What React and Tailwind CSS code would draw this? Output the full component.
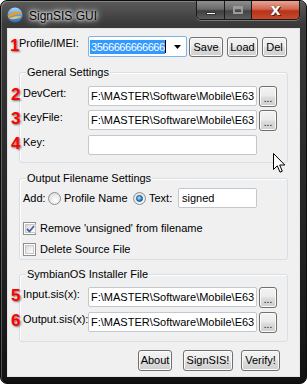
import React from 'react'

const ui = "font-['Liberation_Sans',Arial,sans-serif] text-[11px] leading-[13px] text-black"
const btnSkin =
  'border border-[#707070] rounded-[3px] bg-[linear-gradient(180deg,#f3f3f3_0%,#ebebeb_48%,#dddddd_52%,#cfcfcf_100%)] shadow-[inset_0_0_0_1px_#fbfbfb] flex items-center justify-center'
const boxSkin = 'block bg-white border border-[#c3c7ce] rounded-[2px] overflow-hidden whitespace-nowrap leading-[18px]'
const path = 'F:\\MASTER\\Software\\Mobile\\E63'

function Num({ children, className }) {
  return (
    <span
      className={`absolute font-['Liberation_Sans',Arial,sans-serif] font-bold text-[17px] leading-[17px] text-[#ff0000] [text-shadow:1px_1px_2px_rgba(0,0,0,0.55)] ${className}`}
    >
      {children}
    </span>
  )
}

function Group({ title, className, children }) {
  return (
    <div className={`relative ml-[11px] w-[269px] border border-[#d5dfe5] rounded-[3px] shadow-[inset_1px_1px_0_#ffffff] pl-[3px] ${className}`}>
      <span className="absolute left-[6px] top-[-7px] bg-[#f0f0f0] px-[1px]">{title}</span>
      {children}
    </div>
  )
}

function PathRow({ num, label, value, browse = true, className = '' }) {
  return (
    <div className={`relative flex h-[21px] ${className}`}>
      {num && <Num className="left-[-12px] top-[0px]">{num}</Num>}
      <span className="w-[65px] shrink-0 pt-[1px]">{label}</span>
      <div className={`${boxSkin} w-[169px] shrink-0 h-[20px] pl-[2px]`}>{value}</div>
      {browse && (
        <div className={`${btnSkin} ml-[2px] w-[18px] shrink-0 h-[21px] text-[10px] leading-none pt-[4px]`}>...</div>
      )}
    </div>
  )
}

function Radio({ on }) {
  return (
    <span className="w-[13px] h-[13px] rounded-full border border-[#8e8f8f] bg-[radial-gradient(circle_at_60%_65%,#ffffff_0%,#e6e6e6_60%,#cfcfcf_100%)] flex items-center justify-center shrink-0">
      {on && (
        <span className="w-[7px] h-[7px] rounded-full border border-[#0d4f8c] bg-[radial-gradient(circle_at_40%_35%,#bfe6ff_0%,#3e97df_50%,#0d4f8c_100%)]" />
      )}
    </span>
  )
}

function Check({ on }) {
  return (
    <span className="w-[13px] h-[13px] border border-[#8e8f8f] bg-white p-[1px] shrink-0 flex">
      <span className="flex-1 border border-[#c8c8c8] bg-[linear-gradient(135deg,#d8d8d8_0%,#f4f4f4_70%,#ffffff_100%)] flex items-center justify-center">
        {on && (
          <svg width="9" height="8" viewBox="0 0 9 8">
            <path d="M1 4 L3.5 6.5 L8 1" fill="none" stroke="#4a5f97" strokeWidth="1.8" />
          </svg>
        )}
      </span>
    </span>
  )
}

function AppIcon() {
  return (
    <svg width="16" height="16" viewBox="0 0 16 16">
      <defs>
        <linearGradient id="g1" x1="0" y1="0" x2="0" y2="1">
          <stop offset="0" stopColor="#a9d6f5" />
          <stop offset="1" stopColor="#1f6fb8" />
        </linearGradient>
      </defs>
      <circle cx="8" cy="8" r="7.5" fill="url(#g1)" />
      <path d="M1 9 C4 5, 11 4, 15 6 C12 7, 6 8, 1.5 11 Z" fill="#f39a1e" />
      <path d="M2 11.5 C6 9, 11 9, 14.5 9.5 C11 12, 6 13, 2 11.5 Z" fill="#f7c56a" opacity="0.9" />
    </svg>
  )
}

export default function App() {
  return (
    <div className={`relative w-[307px] h-[385px] bg-white ${ui}`}>
      <div className="w-[307px] h-[384px] rounded-[7px] border border-[#0c0c0c] bg-[linear-gradient(180deg,#5b5b5b_0%,#3a3a3a_6%,#2b2b2b_40%,#1d1d1d_80%,#111111_100%)] px-[6px] pb-[6px] flex flex-col shadow-[inset_1px_1px_0_rgba(255,255,255,0.25)]">
        {/* title bar */}
        <div className="h-[27px] flex items-start shrink-0">
          <div className="mt-[6px]">
            <AppIcon />
          </div>
          <span className="ml-[6px] mt-[8px] font-['Liberation_Sans',Arial,sans-serif] text-[12px] leading-[14px] text-black [text-shadow:0_0_8px_#ffffff,0_0_5px_#ffffff,0_0_3px_#ffffff]">
            SignSIS GUI
          </span>
          <div className="ml-auto flex h-[19px] rounded-b-[5px] border border-t-0 border-[#1a1a1a] overflow-hidden shadow-[0_1px_0_rgba(255,255,255,0.3)]">
            <div className="w-[28px] border-r border-[#1a1a1a] bg-[linear-gradient(180deg,#8e8e8e_0%,#6a6a6a_45%,#3f3f3f_55%,#5c5c5c_100%)] flex items-end justify-center pb-[4px]">
              <span className="w-[10px] h-[3px] bg-white border border-[#333]" />
            </div>
            <div className="w-[27px] border-r border-[#1a1a1a] bg-[linear-gradient(180deg,#8e8e8e_0%,#6a6a6a_45%,#444444_55%,#5c5c5c_100%)] flex items-center justify-center">
              <span className="w-[10px] h-[8px] border-2 border-[#9a9a9a] border-t-[3px]" />
            </div>
            <div className="w-[47px] bg-[linear-gradient(180deg,#e8a493_0%,#d0674f_45%,#b8321a_55%,#c94a2c_100%)] flex items-center justify-center">
              <span className="font-['DejaVu_Sans',sans-serif] font-bold text-[13px] leading-none text-white [text-shadow:0_0_1px_#333,1px_1px_0_#5a1a0d]">
                X
              </span>
            </div>
          </div>
        </div>

        {/* client area */}
        <div className="flex-1 border border-[#e4e4e4] bg-[#f0f0f0] flex flex-col pt-[7px]">
          <div className="relative flex items-end ml-[11px] h-[21px]">
            <Num className="left-[-9px] top-[1px]">1</Num>
            <span className="w-[69px] self-start pt-[1px]">Profile/IMEI:</span>
            <div className="w-[99px] h-[21px] bg-white border border-[#7eb4ea] rounded-[2px] flex items-center pl-[1px]">
              <span className="bg-[#3399ff] text-white pl-[1px] leading-[14px] tracking-[-0.45px]">3566666666666</span>
              <span className="w-[1px] h-[13px] bg-black" />
              <svg className="ml-auto mr-[5px]" width="7" height="4" viewBox="0 0 7 4">
                <path d="M0 0 H7 L3.5 4 Z" fill="#000" />
              </svg>
            </div>
            <div className={`${btnSkin} ml-[2px] w-[34px] h-[20px]`}>Save</div>
            <div className={`${btnSkin} ml-[4px] w-[31px] h-[20px]`}>Load</div>
            <div className={`${btnSkin} ml-[4px] w-[25px] h-[20px]`}>Del</div>
          </div>

          <Group title="General Settings" className="mt-[15px] h-[91px] pt-[13px]">
            <PathRow num="2" label="DevCert:" value={path} />
            <PathRow num="3" label="KeyFile:" value={path} className="mt-[3px]" />
            <PathRow num="4" label="Key:" value="" browse={false} className="mt-[4px]" />
          </Group>

          <Group title="Output Filename Settings" className="mt-[15px] h-[82px] pt-[9px]">
            <div className="flex items-center h-[20px]">
              <span className="w-[25px]">Add:</span>
              <Radio />
              <span className="ml-[3px] w-[69px]">Profile Name</span>
              <Radio on />
              <span className="ml-[3px] w-[29px]">Text:</span>
              <div className={`${boxSkin} w-[79px] h-[20px] pl-[3px]`}>signed</div>
            </div>
            <div className="flex items-center h-[13px] mt-[14px]">
              <Check on />
              <span className="ml-[4px]">Remove 'unsigned' from filename</span>
            </div>
            <div className="flex items-center h-[13px] mt-[8px]">
              <Check />
              <span className="ml-[4px]">Delete Source File</span>
            </div>
          </Group>

          <Group title="SymbianOS Installer File" className="mt-[14px] h-[68px] pt-[12px]">
            <PathRow num="5" label="Input.sis(x):" value={path} />
            <PathRow num="6" label="Output.sis(x):" value={path} className="mt-[4px]" />
          </Group>

          <div className="flex justify-end pr-[19px] mt-[8px]">
            <div className={`${btnSkin} w-[34px] h-[21px]`}>About</div>
            <div className={`${btnSkin} ml-[11px] w-[50px] h-[21px]`}>SignSIS!</div>
            <div className={`${btnSkin} ml-[8px] w-[39px] h-[21px]`}>Verify!</div>
          </div>
        </div>
      </div>

      {/* mouse pointer */}
      <svg className="absolute left-[273px] top-[153px]" width="13" height="21" viewBox="0 0 13 21">
        <path
          d="M0.5 0.5 L0.5 16.5 L4.3 12.8 L7 19.2 L9.3 18.2 L6.7 12 L11.8 12 Z"
          fill="#ffffff"
          stroke="#000000"
          strokeWidth="1"
          strokeLinejoin="round"
        />
      </svg>
    </div>
  )
}
